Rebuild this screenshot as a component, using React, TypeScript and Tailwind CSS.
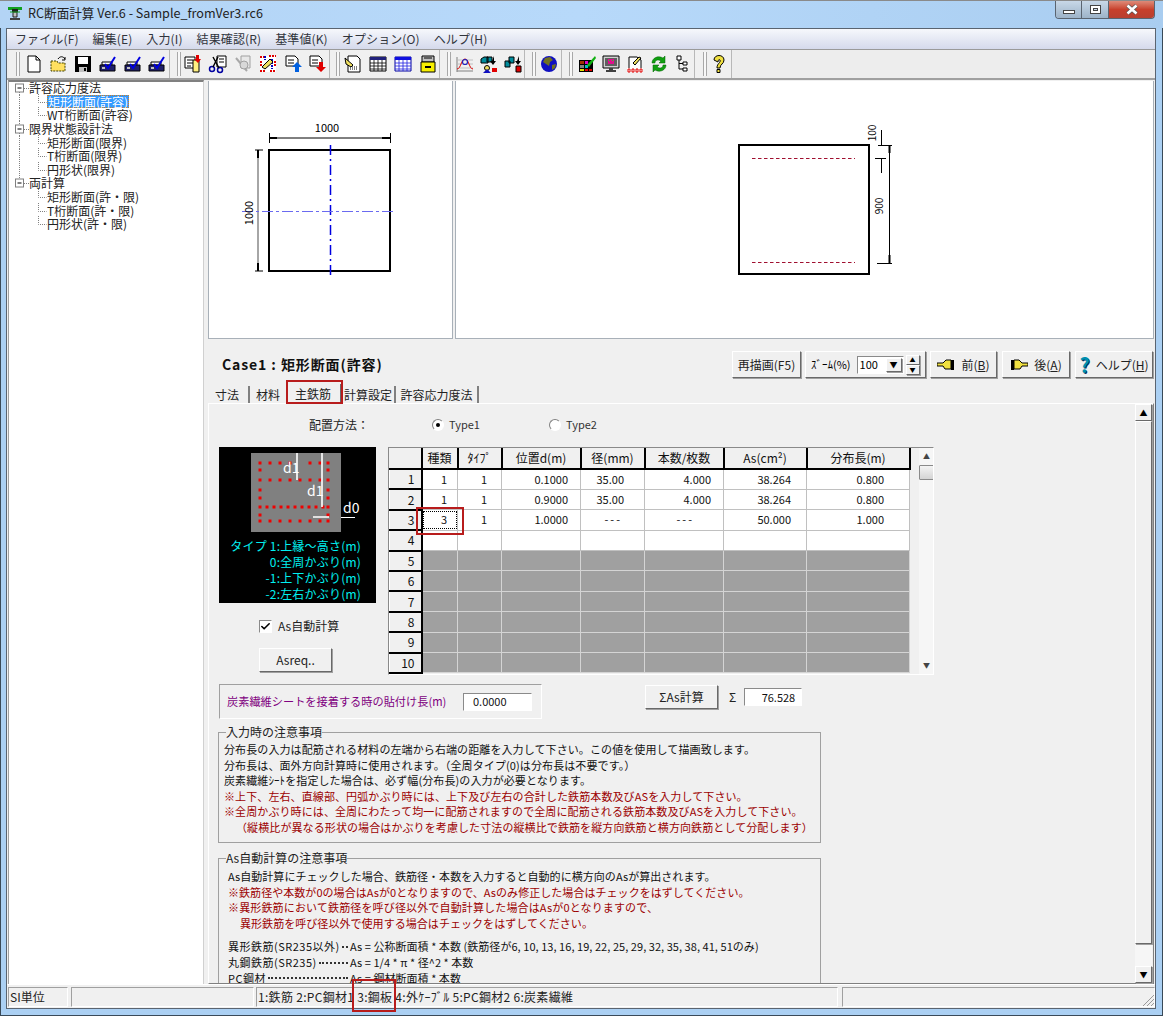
import type { ReactNode } from 'react'
import { Check } from 'lucide-react'

const raised = 'border border-t-white border-l-white border-r-[#696969] border-b-[#696969] bg-[#f0f0f0] shadow-[1px_1px_0_#a0a0a0]'
const sunken = 'border border-t-[#8a8a8a] border-l-[#8a8a8a] border-r-white border-b-white'

function Ic({ children }: { children: ReactNode }) {
  return (
    <svg viewBox="0 0 20 20" className="h-[20px] w-[20px]">
      {children}
    </svg>
  )
}

const page = 'M4 2h8l4 4v12H4z'

function PrinterIcon() {
  return (
    <Ic>
      <path d="M4 8h10v3H4z" fill="#fff" stroke="#000" />
      <path d="M2 11h15v6H2z" fill="#20206a" stroke="#000" />
      <path d="M4 13h3v2H4z" fill="#c0c0c0" />
      <path d="M7 10l3 4 7-11" fill="none" stroke="#0000e0" strokeWidth="2" />
    </Ic>
  )
}

const group1 = [
  <Ic key="new"><path d={page} fill="#fff" stroke="#000" /><path d="M12 2v4h4" fill="none" stroke="#000" /></Ic>,
  <Ic key="open"><path d="M2 7h6l1 2h7v8H2z" fill="#ffe060" stroke="#404000" strokeDasharray="2 1" /><path d="M9 5c2-3 5-3 7 0" fill="none" stroke="#000" /><path d="M16 3v3h-3" fill="none" stroke="#000" /></Ic>,
  <Ic key="save"><path d="M2 2h16v16H2z" fill="#000" /><path d="M5 3h10v7H5z" fill="#fff" /><path d="M6 13h8v5H6z" fill="#c0c0c0" /><path d="M11 14h2v3h-2z" fill="#000" /></Ic>,
  <PrinterIcon key="p1" />,
  <PrinterIcon key="p2" />,
  <PrinterIcon key="p3" />,
]

const group2 = [
  <Ic key="a"><path d="M2 3h10v11H2z" fill="#fff" stroke="#000" /><path d="M4 6h6M4 9h6M4 12h4" stroke="#000" /><path d="M10 6h6v12h-6z" fill="#fff080" stroke="#000" /><path d="M13 1h3v4h2l-3 4-4-4h2z" fill="#e00000" /></Ic>,
  <Ic key="b"><path d="M9 2h9v11H9z" fill="#fff" stroke="#000" /><path d="M11 5h5M11 8h5" stroke="#000" /><circle cx="4" cy="15" r="2.5" fill="none" stroke="#0000a0" strokeWidth="1.5" /><circle cx="12" cy="16" r="2.5" fill="none" stroke="#0000a0" strokeWidth="1.5" /><path d="M5 13L10 3M11 14L5 3" stroke="#000" strokeWidth="1.4" /></Ic>,
  <Ic key="c"><path d="M8 2h9v12H8z" fill="#e8e8e8" stroke="#a0a0a0" /><path d="M3 4l11 13" stroke="#a8a8a8" strokeWidth="2" /><circle cx="11" cy="11" r="4" fill="#d8d8d8" stroke="#a0a0a0" /></Ic>,
  <Ic key="d"><path d="M2 2h16v16H2z" fill="#fff" /><path d="M2 3h5M11 2h7M2 17h6M12 17h6M3 7v6M17 7v6" stroke="#e00000" strokeWidth="2" strokeDasharray="2 1" /><path d="M7 2v4M14 5v10" stroke="#0000c0" strokeWidth="2" strokeDasharray="2 1" /><path d="M4 13L12 5l3 3-8 7z" fill="#f0e060" stroke="#000" /></Ic>,
  <Ic key="e"><path d="M3 2h9l3 3v7H3z" fill="#fff" stroke="#000" /><path d="M5 6h6M5 9h6" stroke="#000" /><path d="M14 8l5 5h-3v5h-4v-5H9z" fill="#0060e0" /></Ic>,
  <Ic key="f"><path d="M3 2h9l3 3v7H3z" fill="#fff" stroke="#000" /><path d="M5 6h6M5 9h6" stroke="#000" /><path d="M12 8h4v5h3l-5 5-5-5h3z" fill="#e00000" /></Ic>,
]

const group3 = [
  <Ic key="a"><path d="M5 2h9l3 3v13H5z" fill="#fff" stroke="#000" /><path d="M7 13h8M7 15h8" stroke="#000" strokeDasharray="1 1" /><path d="M2 4l8 7-2 2-5-3z" fill="#f0e060" stroke="#000" /></Ic>,
  <Ic key="b"><path d="M2 3h16v14H2z" fill="#fff" stroke="#000" /><path d="M2 3h16v3H2z" fill="#20207a" /><path d="M2 9h16M2 12h16M2 15h16M6 6v11M10 6v11M14 6v11" stroke="#000" strokeWidth="0.8" /></Ic>,
  <Ic key="c"><path d="M2 3h16v14H2z" fill="#fff" stroke="#0000a0" /><path d="M2 3h16v3H2z" fill="#1010e0" /><path d="M2 9h16M2 12h16M2 15h16M6 6v11M10 6v11M14 6v11" stroke="#2020e0" strokeWidth="0.8" /></Ic>,
  <Ic key="d"><path d="M4 2h12v6H4z" fill="#c0c0c0" stroke="#000" /><path d="M3 8h14v10H3z" fill="#f8f000" stroke="#000" /><path d="M7 12h6v2H7z" fill="#000" /><path d="M6 4h8" stroke="#000" /></Ic>,
]

const group4 = [
  <Ic key="a"><path d="M2 3v15M2 17h16" stroke="#808080" /><path d="M3 6h15M3 10h15M3 14h15" stroke="#c0c0c0" /><path d="M2 15c4 0 4-10 8-10s4 10 8 10" fill="none" stroke="#e00000" /><circle cx="10" cy="8" r="2.5" fill="none" stroke="#2020c0" strokeWidth="1.2" /></Ic>,
  <Ic key="b"><path d="M2 5l3-2h4v6H2zM8 3h5v5H8z" fill="#008c9c" stroke="#000" /><path d="M15 2v5h2l-3 4-3-4h2" fill="#000" /><circle cx="8" cy="14" r="2.5" fill="#f0e060" stroke="#000" /><path d="M4 19l4-4 4 4z" fill="#1010c0" /><path d="M13 14h5v4h-5z" fill="#e00000" /></Ic>,
  <Ic key="c"><path d="M2 7h5v6H2zM6 3h5v6H6z" fill="#008c9c" stroke="#000" /><path d="M14 2v5h2l-3 4-3-4h2" fill="#000" transform="translate(2)" /><path d="M13 12h5v6h-5z" fill="#e00000" stroke="#000" /></Ic>,
]

const group6 = [
  <Ic key="a"><path d="M2 6h14v12H2z" fill="#000" /><path d="M3 7h4v3H3z" fill="#a03000" /><path d="M8 7h3v3H8z" fill="#e000c0" /><path d="M3 11h4v3H3z" fill="#808080" /><path d="M8 11h3v3H8z" fill="#00c0c0" /><path d="M3 15h4v2H3z" fill="#e0e000" /><path d="M8 15h3v2H8zM12 15h3v2h-3z" fill="#e00000" /><path d="M10 11l8-9 1 2-7 9z" fill="#10b010" /></Ic>,
  <Ic key="b"><path d="M2 2h16v12H2z" fill="#d0d0d0" stroke="#000" /><path d="M4 4h12v8H4z" fill="#606060" /><path d="M7 5h6v5H7z" fill="#e0108c" /><path d="M8 6h1v1H8zM11 6h1v1h-1z" fill="#10e020" /><path d="M8 14h4v2H8zM5 16h10v2H5z" fill="#404040" /></Ic>,
  <Ic key="c"><path d="M4 3h8l4 3v9H4z" fill="#fff" stroke="#000" /><path d="M8 9l6-6 2 1-6 7z" fill="#f0e060" stroke="#000" /><path d="M2 14h16v4H2z" fill="#fff" /><path d="M3 15h2v3H3zM7 15h2v3H7zM11 15h2v3h-2zM15 15h2v3h-2z" fill="none" stroke="#e00000" /></Ic>,
  <Ic key="d"><path d="M3 9c0-5 6-8 11-5l2-2v7h-6l2-2c-3-2-6-1-6 2z" fill="#10a010" stroke="#006000" strokeWidth="0.5" /><path d="M17 11c0 5-6 8-11 5l-2 2v-7h6l-2 2c3 2 6 1 6-2z" fill="#10a010" stroke="#006000" strokeWidth="0.5" /></Ic>,
  <Ic key="e"><path d="M4 2h4v4H4zM10 8h4v3h-4zM10 14h4v3h-4z" fill="#fff" stroke="#000" /><path d="M6 6v9h4M6 9.5h4" fill="none" stroke="#000" /></Ic>,
]

const helpIcon = (
  <Ic>
    <path d="M5 6c0-6 10-6 10 0 0 4-4 4-4 8H8c0-5 4-5 3-8-1-1-2 0-2 2z" fill="#f0e040" stroke="#000" />
    <path d="M8 15.5h3v3H8z" fill="#f0e040" stroke="#000" />
  </Ic>
)

const globeIcon = (
  <Ic>
    <circle cx="10" cy="10" r="8" fill="#1010c0" />
    <path d="M6 4l5-1 3 3-3 2-1 4-3-2-3-2zM13 11l4-1-1 4-3 2z" fill="#707020" />
  </Ic>
)

const toolGroups = [
  { cls: 'w-[161px] pl-[7px]', iconPad: 'pl-[2px]', slot: 'w-[24.6px]', icons: group1 },
  { cls: 'w-[160px] pl-[7px]', iconPad: 'pl-[0px]', slot: 'w-[24.8px]', icons: group2 },
  { cls: 'w-[110px] pl-[6px]', iconPad: 'pl-[0px]', slot: 'w-[25px]', icons: group3 },
  { cls: 'w-[85px] pl-[7px]', iconPad: 'pl-[2px]', slot: 'w-[24px]', icons: group4 },
  { cls: 'w-[37px] pl-[7px]', iconPad: 'pl-[1px]', slot: 'w-[24px]', icons: [globeIcon] },
  { cls: 'w-[133px] pl-[7px]', iconPad: 'pl-[2px]', slot: 'w-[24px]', icons: group6 },
  { cls: 'w-[37px] pl-[8px]', iconPad: 'pl-[0px]', slot: 'w-[24px]', icons: [helpIcon] },
]

function Toolbar() {
  return (
    <div className="flex h-[31px] shrink-0 items-stretch border-t border-t-[#9a9a9a] border-b-2 border-b-[#a0a0a0] bg-[#ededed] pl-[2px]">
      {toolGroups.map((g, i) => (
        <div key={i} className={`flex shrink-0 items-center border-r border-r-[#b8b8b8] bg-[#f0f0f0] ${g.cls}`}>
          <div className="h-[24px] w-[4px] shrink-0 border-x border-x-[#a8a8a8] bg-[#f8f8f8]" />
          <div className={`flex items-center ${g.iconPad}`}>
            {g.icons.map((ic, j) => (
              <div key={j} className={`flex shrink-0 justify-center ${g.slot}`}>
                {ic}
              </div>
            ))}
          </div>
        </div>
      ))}
    </div>
  )
}

const treeRows = [
  { t: '許容応力度法', root: true, rootLine: true },
  { t: '矩形断面(許容)', selected: true, rootLine: true },
  { t: 'WT桁断面(許容)', rootLine: true },
  { t: '限界状態設計法', root: true, rootLine: true },
  { t: '矩形断面(限界)', rootLine: true },
  { t: 'T桁断面(限界)', rootLine: true },
  { t: '円形状(限界)', rootLine: true },
  { t: '両計算', root: true },
  { t: '矩形断面(許・限)' },
  { t: 'T桁断面(許・限)' },
  { t: '円形状(許・限)' },
]

function Tree() {
  return (
    <div className="w-[196px] shrink-0 border-t-2 border-r border-l border-t-[#808080] border-r-[#d0d0d0] border-l-[#a0a0a0] bg-white">
      <div className="-mt-[1px] grid auto-rows-[13.6px] text-[12px] leading-[13px] text-[#222]">
        {treeRows.map((r, i) =>
          r.root ? (
            <div key={i} className="flex items-center">
              <svg width="20" height="13" className="shrink-0 overflow-visible">
                {r.rootLine && <path d="M10.5 7v8" stroke="#808080" strokeDasharray="1 1" />}
                {i > 0 && <path d="M10.5 -1v3" stroke="#808080" strokeDasharray="1 1" />}
                <path d="M15 7.5h5" stroke="#808080" strokeDasharray="1 1" />
                <rect x="6.5" y="3" width="8" height="8" fill="#fff" stroke="#808080" />
                <path d="M8.5 7h4" stroke="#000" />
              </svg>
              <span>{r.t}</span>
            </div>
          ) : (
            <div key={i} className="flex items-center">
              <svg width="38" height="13" className="shrink-0 overflow-visible">
                {r.rootLine && <path d="M10.5 0v14" stroke="#808080" strokeDasharray="1 1" />}
                <path d="M29.5 -1v8.5h8" fill="none" stroke="#808080" strokeDasharray="1 1" />
              </svg>
              <span className={r.selected ? 'border border-dotted border-[#d08020] bg-[#3399ff] leading-[11px] text-white' : ''}>{r.t}</span>
            </div>
          ),
        )}
      </div>
    </div>
  )
}

function LeftPreview() {
  return (
    <svg viewBox="209 81 243 257" className="block h-full w-full bg-white">
      <rect x="269" y="150" width="121" height="121" fill="none" stroke="#000" strokeWidth="2" />
      <path d="M269.5 133v10M390.5 133v10M269 138h121" stroke="#000" />
      <path d="M269 138h8M382 138h8" stroke="#000" strokeWidth="2" />
      <path d="M258 150v121" stroke="#888" strokeWidth="1.5" />
      <path d="M255 150h8M255 271h8" stroke="#000" />
      <path d="M258 150v8M258 263v8" stroke="#000" strokeWidth="2" />
      <path d="M330.5 145v132" stroke="#0000e0" strokeWidth="1.5" strokeDasharray="10 4 2 4" />
      <path d="M242 211.5h154" stroke="#6a6af0" strokeDasharray="11 3 3 3" />
      <text x="327" y="132" textAnchor="middle" fontSize="11" fill="#000" fontFamily="Noto Sans CJK JP, sans-serif">1000</text>
      <text x="-213" y="253" transform="rotate(-90)" textAnchor="middle" fontSize="11" fill="#000" fontFamily="Noto Sans CJK JP, sans-serif">1000</text>
    </svg>
  )
}

function RightPreview() {
  return (
    <svg viewBox="456 81 697 257" className="block h-full w-full bg-white">
      <rect x="739" y="145" width="130" height="129" fill="none" stroke="#000" strokeWidth="2" />
      <path d="M752 158.5h103M752 262.5h103" stroke="#a01030" strokeDasharray="3.5 2.5" />
      <path d="M889.5 145v118" stroke="#000" />
      <path d="M889.5 145v8M889.5 255v8" stroke="#000" strokeWidth="2" />
      <path d="M878 145.5h14M877 263.5h15M875 158.5h11M881.5 130v15M881.5 158v15" stroke="#000" />
      <text x="-133" y="876" transform="rotate(-90)" textAnchor="middle" fontSize="10" fill="#000" fontFamily="Noto Sans CJK JP, sans-serif">100</text>
      <text x="-206" y="883" transform="rotate(-90)" textAnchor="middle" fontSize="10" fill="#000" fontFamily="Noto Sans CJK JP, sans-serif">900</text>
    </svg>
  )
}

function Btn({ className, children }: { className: string; children: ReactNode }) {
  return <div className={`flex items-center justify-center gap-[6px] text-[12px] text-[#222] ${raised} ${className}`}>{children}</div>
}

function HeaderRow() {
  return (
    <div className="flex h-[45px] shrink-0 items-start pt-[12px]">
      <div className="w-[524px] pt-[4px] pl-[14px] text-[14px] leading-[18px] font-bold tracking-[0.9px] text-[#111]">Case1 : 矩形断面(許容)</div>
      <Btn className="h-[27px] w-[69px]">再描画(F5)</Btn>
      <div className={`ml-[4px] flex h-[27px] w-[121px] items-center pl-[5px] text-[11px] ${raised}`}>
        <span>ｽﾞｰﾑ(%)</span>
        <div className={`ml-[6px] flex h-[18px] w-[47px] items-center justify-between bg-white pr-[1px] pl-[2px] ${sunken}`}>
          <span className="text-[11px] leading-none">100</span>
          <span className={`flex h-[14px] w-[16px] items-center justify-center text-[8px] leading-none ${raised}`}>▼</span>
        </div>
        <div className="ml-[2px] flex flex-col">
          <span className={`flex h-[10px] w-[14px] items-center justify-center text-[6px] leading-none ${raised}`}>▲</span>
          <span className={`flex h-[10px] w-[14px] items-center justify-center text-[6px] leading-none ${raised}`}>▼</span>
        </div>
      </div>
      <Btn className="ml-[4px] h-[27px] w-[67px]">
        <svg width="18" height="12" viewBox="0 0 18 12"><path d="M0 4h6l3-3h5v9H8L6 7H0z" fill="#f0e040" stroke="#000" /><path d="M14 1h3v10h-3z" fill="#000" /></svg>
        <span>前(<u>B</u>)</span>
      </Btn>
      <Btn className="ml-[5px] h-[27px] w-[68px]">
        <svg width="18" height="12" viewBox="0 0 18 12"><path d="M18 4h-6L9 1H4v9h6l2-3h6z" fill="#f0e040" stroke="#000" /><path d="M1 1h3v10H1z" fill="#000" /></svg>
        <span>後(<u>A</u>)</span>
      </Btn>
      <Btn className="ml-[5px] h-[27px] w-[78px]">
        <span className="text-[20px] leading-none font-bold text-[#0090b0] [text-shadow:1px_1px_0_#003060]">?</span>
        <span>ヘルプ(<u>H</u>)</span>
      </Btn>
    </div>
  )
}

function Tabs() {
  return (
    <div className="flex h-[19px] shrink-0 items-end pl-[6px] text-[12px] leading-[16px] text-[#222]">
      <div className="flex h-[17px] w-[36px] items-center border-r-2 border-r-[#808080] pl-[1px]">寸法</div>
      <div className="flex h-[17px] w-[36px] items-center justify-center">材料</div>
      <div className="-mb-[1px] flex h-[20px] w-[56px] items-center justify-center border-r-2 border-r-[#696969] bg-[#f0f0f0]">主鉄筋</div>
      <div className="flex h-[17px] w-[54px] items-center justify-center border-r-2 border-r-[#808080]">計算設定</div>
      <div className="flex h-[17px] w-[83px] items-center justify-center border-r-2 border-r-[#808080]">許容応力度法</div>
    </div>
  )
}

const spaced = [260, 270, 280, 290, 310, 320, 328]
const dense = [260, 267, 274, 281, 288, 295, 302, 309, 316, 323, 328]
const dots = [
  ...spaced.map(x => [x, 463]),
  ...[...spaced, 300].map(x => [x, 480]),
  ...dense.map(x => [x, 507]),
  ...[...spaced, 300].map(x => [x, 521]),
  ...[470, 490, 498, 515].flatMap(y => [
    [260, y],
    [328, y],
  ]),
]

function TypeDiagram() {
  return (
    <div className="h-[156px] w-[157px] shrink-0 bg-black">
      <svg viewBox="219 447 157 92" className="block h-[92px] w-[157px]">
        <rect x="251" y="453" width="90" height="79" fill="#808080" />
        {dots.map(([x, y], i) => (
          <rect key={i} x={x - 1.5} y={y - 1.5} width="3" height="3" fill="#f00000" />
        ))}
        <path d="M297 453v27M322 453v54M313 517h16" stroke="#fff" strokeWidth="1.6" />
        <path d="M341 517.5h14" stroke="#fff" />
        <text x="283" y="473" fontSize="14" fill="#fff" fontFamily="Noto Sans CJK JP, sans-serif">d1</text>
        <text x="307" y="496" fontSize="14" fill="#fff" fontFamily="Noto Sans CJK JP, sans-serif">d1</text>
        <text x="343" y="513" fontSize="14" fill="#fff" fontFamily="Noto Sans CJK JP, sans-serif">d0</text>
      </svg>
      <div className="-mt-[1px] flex flex-col pr-[15px] text-right text-[12px] leading-[16px] tracking-[0.2px] text-[#00f0f0]">
        <span>タイプ 1:上縁～高さ(m)</span>
        <span>0:全周かぶり(m)</span>
        <span>-1:上下かぶり(m)</span>
        <span>-2:左右かぶり(m)</span>
      </div>
    </div>
  )
}

const cols = ['w-[32px]', 'w-[36px]', 'w-[44px]', 'w-[79px]', 'w-[64px]', 'w-[79px]', 'w-[83px]', 'w-[103px]']
const headers = ['', '種類', 'ﾀｲﾌﾟ', '位置d(m)', '径(mm)', '本数/枚数', 'As(cm²)', '分布長(m)']
const cellPad = ['pr-[10px]', 'pr-[14px]', 'pr-[12px]', 'pr-[20px]', 'pr-[12px]', 'pr-[15px]', 'pr-[25px]']
const dashPad = ['', '', '', 'pr-[22px]', 'pr-[29px]', '', '']
const rows = [
  ['1', '1', '0.1000', '35.00', '4.000', '38.264', '0.800'],
  ['1', '1', '0.9000', '35.00', '4.000', '38.264', '0.800'],
  ['3', '1', '1.0000', '---', '---', '50.000', '1.000'],
  ['', '', '', '', '', '', ''],
]

function RebarTable() {
  return (
    <div className={`flex h-[228px] w-[546px] shrink-0 overflow-hidden bg-[#f0f0f0] ${sunken}`}>
      <table className="h-fit w-[520px] table-fixed border-collapse text-[11px] leading-none text-[#111]">
        <colgroup>
          {cols.map((c, i) => <col key={i} className={c} />)}
        </colgroup>
        <thead>
          <tr className="h-[21px]">
            {headers.map((h, i) => (
              <th key={i} className="border-r-2 border-b-2 border-r-black border-b-black bg-[#f0f0f0] text-[12px] font-normal">
                {h}
              </th>
            ))}
          </tr>
        </thead>
        <tbody>
          {Array.from({ length: 10 }, (_, r) => (
            <tr key={r} className="h-[20.4px]">
              <td className={`border-r-2 border-b-2 border-r-black border-b-black bg-[#f0f0f0] pr-[6px] text-right text-[12px] ${raised}`}>{r + 1}</td>
              {(rows[r] ?? ['', '', '', '', '', '', '']).map((v, c) => (
                <td
                  key={c}
                  className={`border border-l-0 text-right ${v === '---' ? `tracking-[2px] ${dashPad[c]}` : cellPad[c]} ${r > 3 ? 'border-[#d4d4d4] bg-[#a0a0a0]' : 'border-[#c0c0c0] bg-white'} ${r === 2 && c === 0 ? 'outline-1 -outline-offset-2 outline-black outline-dotted' : ''}`}
                >
                  {v}
                </td>
              ))}
            </tr>
          ))}
        </tbody>
      </table>
      <div className="ml-[8px] flex h-full w-[16px] flex-col bg-[#f6f6f6]">
        <span className="flex h-[17px] items-center justify-center text-[7px] leading-none text-[#444]">▲</span>
        <span className="h-[15px] w-[16px] rounded-[1px] border border-[#8a8a8a] bg-gradient-to-b from-[#f4f4f4] to-[#d4d4d4]" />
        <span className="flex-1" />
        <span className="flex h-[17px] items-center justify-center text-[7px] leading-none text-[#444]">▼</span>
      </div>
    </div>
  )
}

function Radio({ on, label, className }: { on?: boolean; label: string; className: string }) {
  return (
    <div className={`flex items-center gap-[5px] ${className}`}>
      <span className="flex h-[12px] w-[12px] items-center justify-center rounded-full border border-t-[#808080] border-r-white border-b-white border-l-[#808080] bg-white">
        {on && <span className="h-[4px] w-[4px] rounded-full bg-black" />}
      </span>
      <span className="text-[11px] text-[#333]">{label}</span>
    </div>
  )
}

function Fieldset({ title, className, children }: { title: string; className: string; children: ReactNode }) {
  return (
    <fieldset className={`ml-[8px] w-[603px] shrink-0 border border-[#a0a0a0] pl-[5px] ${className}`}>
      <legend className="ml-[2px] px-0 text-[12px] leading-[14px] text-[#222]">{title}</legend>
      {children}
    </fieldset>
  )
}

function CalcRow({ label, rest }: { label: string; rest: string }) {
  return (
    <div className="flex">
      <div className="flex w-[122px] shrink-0 items-center">
        <span className="shrink-0 tracking-[0.5px]">{label}</span>
        <span className="mx-[2px] flex-1 border-b-2 border-dotted border-[#333]" />
      </div>
      <span>{rest}</span>
    </div>
  )
}

function Notes() {
  return (
    <>
      <Fieldset title="入力時の注意事項" className="mt-[6px] h-[118px]">
        <div className="flex flex-col pt-[3px] text-[11px] leading-[15.5px] tracking-[0.1px] whitespace-nowrap text-[#111]">
          <span>分布長の入力は配筋される材料の左端から右端の距離を入力して下さい。この値を使用して描画致します。</span>
          <span>分布長は、面外方向計算時に使用されます。（全周タイプ(0)は分布長は不要です。）</span>
          <span>炭素繊維ｼｰﾄを指定した場合は、必ず幅(分布長)の入力が必要となります。</span>
          <span className="text-[#9c0000]">※上下、左右、直線部、円弧かぶり時には、上下及び左右の合計した鉄筋本数及びASを入力して下さい。</span>
          <span className="text-[#9c0000]">※全周かぶり時には、全周にわたって均一に配筋されますので全周に配筋される鉄筋本数及びASを入力して下さい。</span>
          <span className="pl-[12px] text-[#9c0000]">（縦横比が異なる形状の場合はかぶりを考慮した寸法の縦横比で鉄筋を縦方向鉄筋と横方向鉄筋として分配します）</span>
        </div>
      </Fieldset>
      <Fieldset title="As自動計算の注意事項" className="mt-[8px] h-[140px]">
        <div className="flex flex-col pt-[4px] pl-[4px] text-[11px] leading-[15.6px] tracking-[0.05px] whitespace-nowrap text-[#111]">
          <span>As自動計算にチェックした場合、鉄筋径・本数を入力すると自動的に横方向のAsが算出されます。</span>
          <span className="text-[#9c0000]">※鉄筋径や本数が0の場合はAsが0となりますので、Asのみ修正した場合はチェックをはずしてください。</span>
          <span className="tracking-[0.15px] text-[#9c0000]">※異形鉄筋において鉄筋径を呼び径以外で自動計算した場合はAsが0となりますので、</span>
          <span className="pl-[12px] text-[#9c0000]">異形鉄筋を呼び径以外で使用する場合はチェックをはずしてください。</span>
          <div className="mt-[8px]">
            <CalcRow label="異形鉄筋(SR235以外)" rest="As = 公称断面積 * 本数 (鉄筋径が6, 10, 13, 16, 19, 22, 25, 29, 32, 35, 38, 41, 51のみ)" />
            <CalcRow label="丸鋼鉄筋(SR235)" rest="As = 1/4 * π * 径^2 * 本数" />
            <CalcRow label="PC鋼材" rest="As = 鋼材断面積 * 本数" />
          </div>
        </div>
      </Fieldset>
    </>
  )
}

function FormPanel() {
  return (
    <div className="flex min-h-0 flex-1 border border-t-white border-r-[#808080] border-b-[#808080] border-l-white bg-[#f0f0f0] pr-[1px]">
      <div className="flex min-w-0 flex-1 flex-col overflow-hidden pl-[1px]">
        <div className="flex h-[43px] shrink-0 items-center pb-[2px] pl-[99px] text-[12px] text-[#222]">
          <span className="w-[123px]">配置方法：</span>
          <Radio on label="Type1" className="w-[117px]" />
          <Radio label="Type2" className="" />
        </div>
        <div className="flex shrink-0 pl-[9px]">
          <div className="flex w-[169px] shrink-0 flex-col">
            <TypeDiagram />
            <div className="mt-[16px] flex h-[14px] items-center pl-[40px] text-[12px] text-[#222]">
              <span className={`mr-[6px] flex h-[13px] w-[13px] items-center justify-center bg-white ${sunken}`}>
                <Check size={11} strokeWidth={3.5} color="#000" />
              </span>
              As自動計算
            </div>
            <Btn className="mt-[15px] ml-[40px] h-[24px] w-[73px]">Asreq..</Btn>
          </div>
          <RebarTable />
        </div>
        <div className="mt-[9px] flex shrink-0 items-start pl-[9px]">
          <div className="flex h-[35px] w-[323px] items-center border border-t-[#a0a0a0] border-r-white border-b-white border-l-[#a0a0a0] pl-[7px] text-[11.2px] whitespace-nowrap text-[#800080]">
            <span className="w-[236px]">炭素繊維シートを接着する時の貼付け長(m)</span>
            <span className={`flex h-[18px] w-[69px] items-center bg-white pl-[9px] text-[11px] text-[#111] ${sunken}`}>0.0000</span>
          </div>
          <Btn className="mt-[1px] ml-[103px] h-[24px] w-[73px]">ΣAs計算</Btn>
          <span className="mt-[4px] ml-[11px] text-[12px] text-[#222]">Σ</span>
          <span className={`mt-[4px] ml-[8px] flex h-[18px] w-[58px] items-center justify-end bg-white pr-[6px] text-[11px] text-[#111] ${sunken}`}>76.528</span>
        </div>
        <Notes />
      </div>
      <div className="flex w-[17px] shrink-0 flex-col bg-[#f6f6f6]">
        <span className={`flex h-[17px] shrink-0 items-center justify-center text-[8px] leading-none ${raised}`}>▲</span>
        <span className={`h-[523px] shrink-0 ${raised}`} />
        <span className="flex-1" />
        <span className={`flex h-[17px] shrink-0 items-center justify-center text-[8px] leading-none ${raised}`}>▼</span>
      </div>
    </div>
  )
}

function StatusBar() {
  const cell = 'flex h-[20px] items-center border border-t-[#a0a0a0] border-r-white border-b-white border-l-[#a0a0a0] text-[12px] text-[#222]'
  return (
    <div className="flex h-[24px] shrink-0 items-start border-t border-t-white bg-[#f0f0f0] pt-[2px] pl-[1px]">
      <div className={`w-[60px] pl-[1px] ${cell}`}>SI単位</div>
      <div className={`ml-[3px] w-[183px] ${cell}`} />
      <div className={`ml-[2px] w-[582px] pl-[1px] text-[11.5px] tracking-[0.3px] whitespace-nowrap ${cell}`}>1:鉄筋 2:PC鋼材1 3:鋼板 4:外ｹｰﾌﾞﾙ 5:PC鋼材2 6:炭素繊維</div>
      <div className={`ml-[4px] flex-1 justify-end ${cell}`}>
        <svg width="12" height="12" viewBox="0 0 12 12" className="mt-[6px]">
          <path d="M1 12L12 1M5 12l7-7M9 12l3-3" stroke="#9a9a9a" />
        </svg>
      </div>
    </div>
  )
}

export default function App() {
  return (
    <div className="relative flex h-[1016px] w-[1163px] flex-col overflow-hidden bg-[#abd0f3] font-['Noto_Sans_CJK_JP','Noto_Sans',sans-serif] shadow-[inset_0_-1px_0_#3a4a58,inset_-1px_0_0_#3a4a58,inset_1px_0_0_#3a4a58]">
      <div className="flex h-[28px] shrink-0 items-start justify-between border-t border-t-[#8a8a8a] bg-gradient-to-r from-[#b3d4f5] via-[#b7d9fa] to-[#a9cdf0] pr-[8px]">
        <div className="flex items-center pt-[3px] pl-[6px]">
          <svg width="18" height="18" viewBox="0 0 18 18" className="mr-[4px]">
            <path d="M2 3h14v3H2z" fill="#10a020" />
            <path d="M6 5h6v3H6z" fill="#202020" />
            <path d="M7 8h4v5H7z" fill="#c0c0c0" stroke="#202020" />
            <path d="M4 8h10" stroke="#10a020" />
            <path d="M4 15h10" stroke="#404040" strokeWidth="2" />
          </svg>
          <span className="text-[12.6px] leading-[18px] text-[#222]">RC断面計算 Ver.6 - Sample_fromVer3.rc6</span>
        </div>
        <div className="flex h-[18px] overflow-hidden rounded-b-[4px] border border-t-0 border-[#5a6470]">
          <div className="flex w-[26px] items-center justify-center border-r border-r-[#5a6470] bg-gradient-to-b from-[#c8d8e8] to-[#9db3c8]">
            <span className="mt-[4px] h-[4px] w-[12px] border border-[#444] bg-white" />
          </div>
          <div className="flex w-[27px] items-center justify-center border-r border-r-[#5a6470] bg-gradient-to-b from-[#c8d8e8] to-[#9db3c8]">
            <span className="flex h-[9px] w-[11px] items-center justify-center border border-[#444] bg-white">
              <span className="h-[3px] w-[5px] border border-[#444] bg-[#c8d8e8]" />
            </span>
          </div>
          <div className="flex w-[45px] items-center justify-center bg-gradient-to-b from-[#dd8a78] via-[#c8402c] to-[#b84030]">
            <svg width="14" height="11" viewBox="0 0 14 11">
              <path d="M2.5 1.5l9 8M11.5 1.5l-9 8" stroke="#555" strokeWidth="4" />
              <path d="M2.5 1.5l9 8M11.5 1.5l-9 8" stroke="#fff" strokeWidth="2.6" />
            </svg>
          </div>
        </div>
      </div>

      <div className="mr-[7px] mb-[7px] ml-[6px] flex min-h-0 flex-1 flex-col border border-[#5a6470] bg-[#f0f0f0]">
        <div className="flex h-[20px] shrink-0 items-center gap-[14px] bg-gradient-to-b from-[#f6f8fc] to-[#d5daec] pl-[8px] text-[12px] tracking-[0.12px] text-[#30343c]">
          <span>ファイル(F)</span>
          <span>編集(E)</span>
          <span>入力(I)</span>
          <span>結果確認(R)</span>
          <span>基準値(K)</span>
          <span>オプション(O)</span>
          <span>ヘルプ(H)</span>
        </div>
        <Toolbar />
        <div className="flex min-h-0 flex-1 pl-[1px]">
          <Tree />
          <div className="ml-[4px] flex min-w-0 flex-1 flex-col pr-[1px]">
            <div className="flex h-[259px] shrink-0 gap-[2px] pt-[1px]">
              <div className="w-[245px] shrink-0 border border-t-0 border-[#a8b0b8]">
                <LeftPreview />
              </div>
              <div className="min-w-0 flex-1 border border-t-0 border-[#a8b0b8]">
                <RightPreview />
              </div>
            </div>
            <HeaderRow />
            <Tabs />
            <FormPanel />
          </div>
        </div>
        <StatusBar />
      </div>

      {/* red annotation boxes drawn on top of the screenshot */}
      <div className="absolute top-[380px] left-[286px] h-[24px] w-[57px] border-2 border-[#b81c1c]" />
      <div className="absolute top-[507px] left-[416px] h-[28px] w-[48px] border-2 border-[#b81c1c]" />
      <div className="absolute top-[979px] left-[352px] h-[33px] w-[44px] border-2 border-[#b81c1c]" />
    </div>
  )
}
